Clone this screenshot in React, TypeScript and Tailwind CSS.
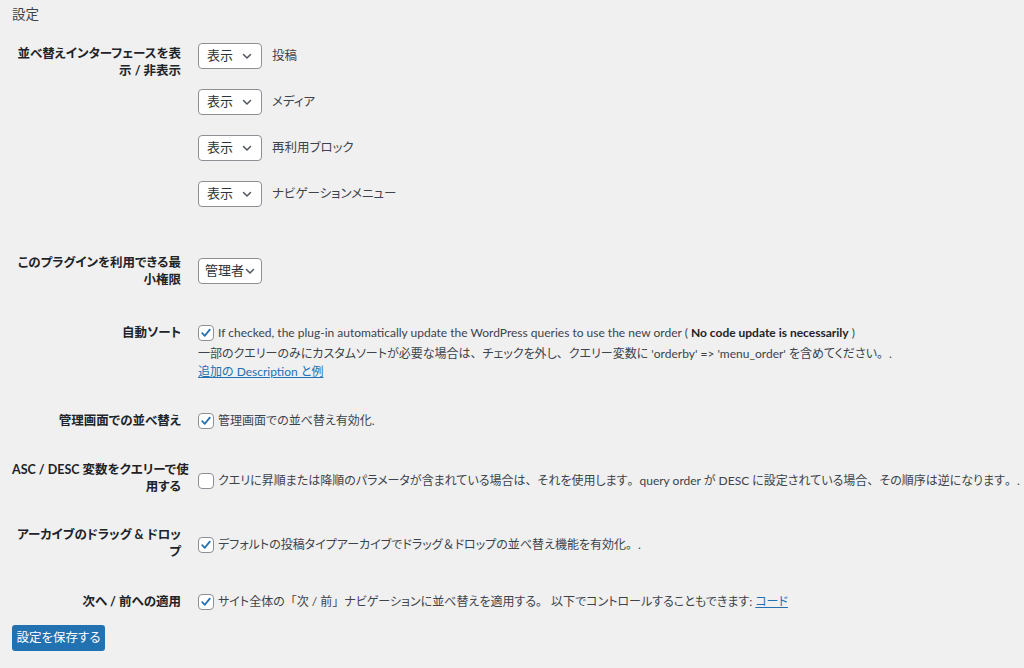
import React from "react";

const font = {
  fontFamily: 'Lato, "Noto Sans CJK JP", sans-serif',
};

function J({ text }: { text: string }) {
  const parts = text.split(/([、。「」＆])/);
  return (
    <>
      {parts.map((p, i) =>
        /^[、。「」＆]$/.test(p) ? (
          <span key={i} className="[font-feature-settings:normal]">
            {p}
          </span>
        ) : (
          <React.Fragment key={i}>{p}</React.Fragment>
        )
      )}
    </>
  );
}

function Chevron() {
  return (
    <svg width="12" height="12" viewBox="0 0 12 12" className="shrink-0">
      <path d="M2.5 4.5 L6 8 L9.5 4.5" fill="none" stroke="#50575e" strokeWidth="1.5" strokeLinecap="round" strokeLinejoin="round" />
    </svg>
  );
}

function Select({ label }: { label: string }) {
  return (
    <div className="flex h-[26px] w-[64px] items-center justify-between whitespace-nowrap rounded-[4px] border border-[#8c8f94] bg-white pl-[8px] pr-[8px] text-[13px] text-[#2c3338]">
      <span>{label}</span>
      <Chevron />
    </div>
  );
}

function Check({ checked = true }: { checked?: boolean }) {
  return (
    <div className="flex h-[16px] w-[16px] shrink-0 items-center justify-center rounded-[4px] border border-[#8c8f94] bg-white">
      {checked && (
        <svg width="12" height="12" viewBox="0 0 12 12">
          <path d="M2.2 6.2 L4.8 8.8 L9.8 2.6" fill="none" stroke="#2271b1" strokeWidth="1.8" strokeLinecap="round" strokeLinejoin="round" />
        </svg>
      )}
    </div>
  );
}

function Label({ children, pt = 0 }: { children: React.ReactNode; pt?: number }) {
  return (
    <div
      className="w-[169px] shrink-0 whitespace-nowrap text-right text-[12.5px] font-bold leading-[17px] text-[#1d2327] [font-feature-settings:'palt']"
      style={{ paddingTop: pt }}
    >
      {children}
    </div>
  );
}

export default function App() {
  return (
    <div className="min-h-[668px] w-[1024px] bg-[#f0f0f1] pl-[12px] text-[13px] text-[#3c434a]" style={font}>
      <div className="pt-[5px] text-[13.5px] leading-[18px] text-[#3c434a]">設定</div>

      {/* Row 1 */}
      <div className="mt-[20px] flex gap-[17px]">
        <Label pt={2}>
          並べ替えインターフェースを表
          <br />
          示 / 非表示
        </Label>
        <div className="flex flex-col gap-[20px]">
          {["投稿", "メディア", "再利用ブロック", "ナビゲーションメニュー"].map((t) => (
            <div key={t} className="flex items-center gap-[10px]">
              <Select label="表示" />
              <span className="text-[12.5px] [font-feature-settings:'palt']">{t}</span>
            </div>
          ))}
        </div>
      </div>

      {/* Row 2 */}
      <div className="mt-[47px] flex gap-[17px]">
        <Label>
          このプラグインを利用できる最
          <br />
          小権限
        </Label>
        <div className="pt-[4px]">
          <div className="flex h-[26px] w-[64px] items-center justify-between whitespace-nowrap rounded-[4px] border border-[#8c8f94] bg-white pl-[6px] pr-[5px] text-[13px] text-[#2c3338] [font-feature-settings:'palt']">
            <span>管理者</span>
            <Chevron />
          </div>
        </div>
      </div>

      {/* Row 3 */}
      <div className="mt-[36px] flex gap-[17px]">
        <Label>自動ソート</Label>
        <div className="flex flex-col text-[12px] [font-feature-settings:'palt']">
          <div className="flex h-[18px] items-center gap-[4px]">
            <Check />
            <span>
              If checked, the plug-in automatically update the WordPress queries to use the new order ({" "}
              <b className="text-[#1d2327]">No code update is necessarily</b> )
            </span>
          </div>
          <div className="mt-[3px] leading-[18px]">
            <J text="一部のクエリーのみにカスタムソートが必要な場合は、チェックを外し、クエリー変数に 'orderby' => 'menu_order' を含めてください。." />
          </div>
          <div className="leading-[18px]">
            <a className="text-[#2271b1] underline">追加の Description と例</a>
          </div>
        </div>
      </div>

      {/* Row 4 */}
      <div className="mt-[31px] flex gap-[17px]">
        <Label>管理画面での並べ替え</Label>
        <div className="flex h-[18px] items-center gap-[4px] text-[12px] [font-feature-settings:'palt']">
          <Check />
          <span>管理画面での並べ替え有効化.</span>
        </div>
      </div>

      {/* Row 5 */}
      <div className="mt-[31px] flex gap-[17px]">
        <Label>
          ASC / DESC 変数をクエリーで使
          <br />
          用する
        </Label>
        <div className="mt-[11px] flex h-[18px] items-center gap-[4px] text-[12px] [font-feature-settings:'palt']">
          <Check checked={false} />
          <span className="whitespace-nowrap">
            <J text="クエリに昇順または降順のパラメータが含まれている場合は、それを使用します。query order が DESC に設定されている場合、その順序は逆になります。." />
          </span>
        </div>
      </div>

      {/* Row 6 */}
      <div className="mt-[31px] flex gap-[17px]">
        <Label>
          アーカイブのドラッグ &amp; ドロッ
          <br />
          プ
        </Label>
        <div className="mt-[10px] flex h-[18px] items-center gap-[4px] text-[12px] [font-feature-settings:'palt']">
          <Check />
          <span>
            <J text="デフォルトの投稿タイプアーカイブでドラッグ＆ドロップの並べ替え機能を有効化。." />
          </span>
        </div>
      </div>

      {/* Row 7 */}
      <div className="mt-[33px] flex gap-[17px]">
        <Label>次へ / 前への適用</Label>
        <div className="flex h-[18px] items-center gap-[4px] text-[12px] [font-feature-settings:'palt']">
          <Check />
          <span>
            <J text="サイト全体の「次 / 前」ナビゲーションに並べ替えを適用する。 以下でコントロールすることもできます: " />
            <a className="text-[#2271b1] underline">コード</a>
          </span>
        </div>
      </div>

      <div className="mt-[14px]">
        <button className="h-[26px] w-[93px] rounded-[3px] bg-[#2271b1] text-[12.5px] text-white [font-feature-settings:'palt']">
          設定を保存する
        </button>
      </div>
    </div>
  );
}
